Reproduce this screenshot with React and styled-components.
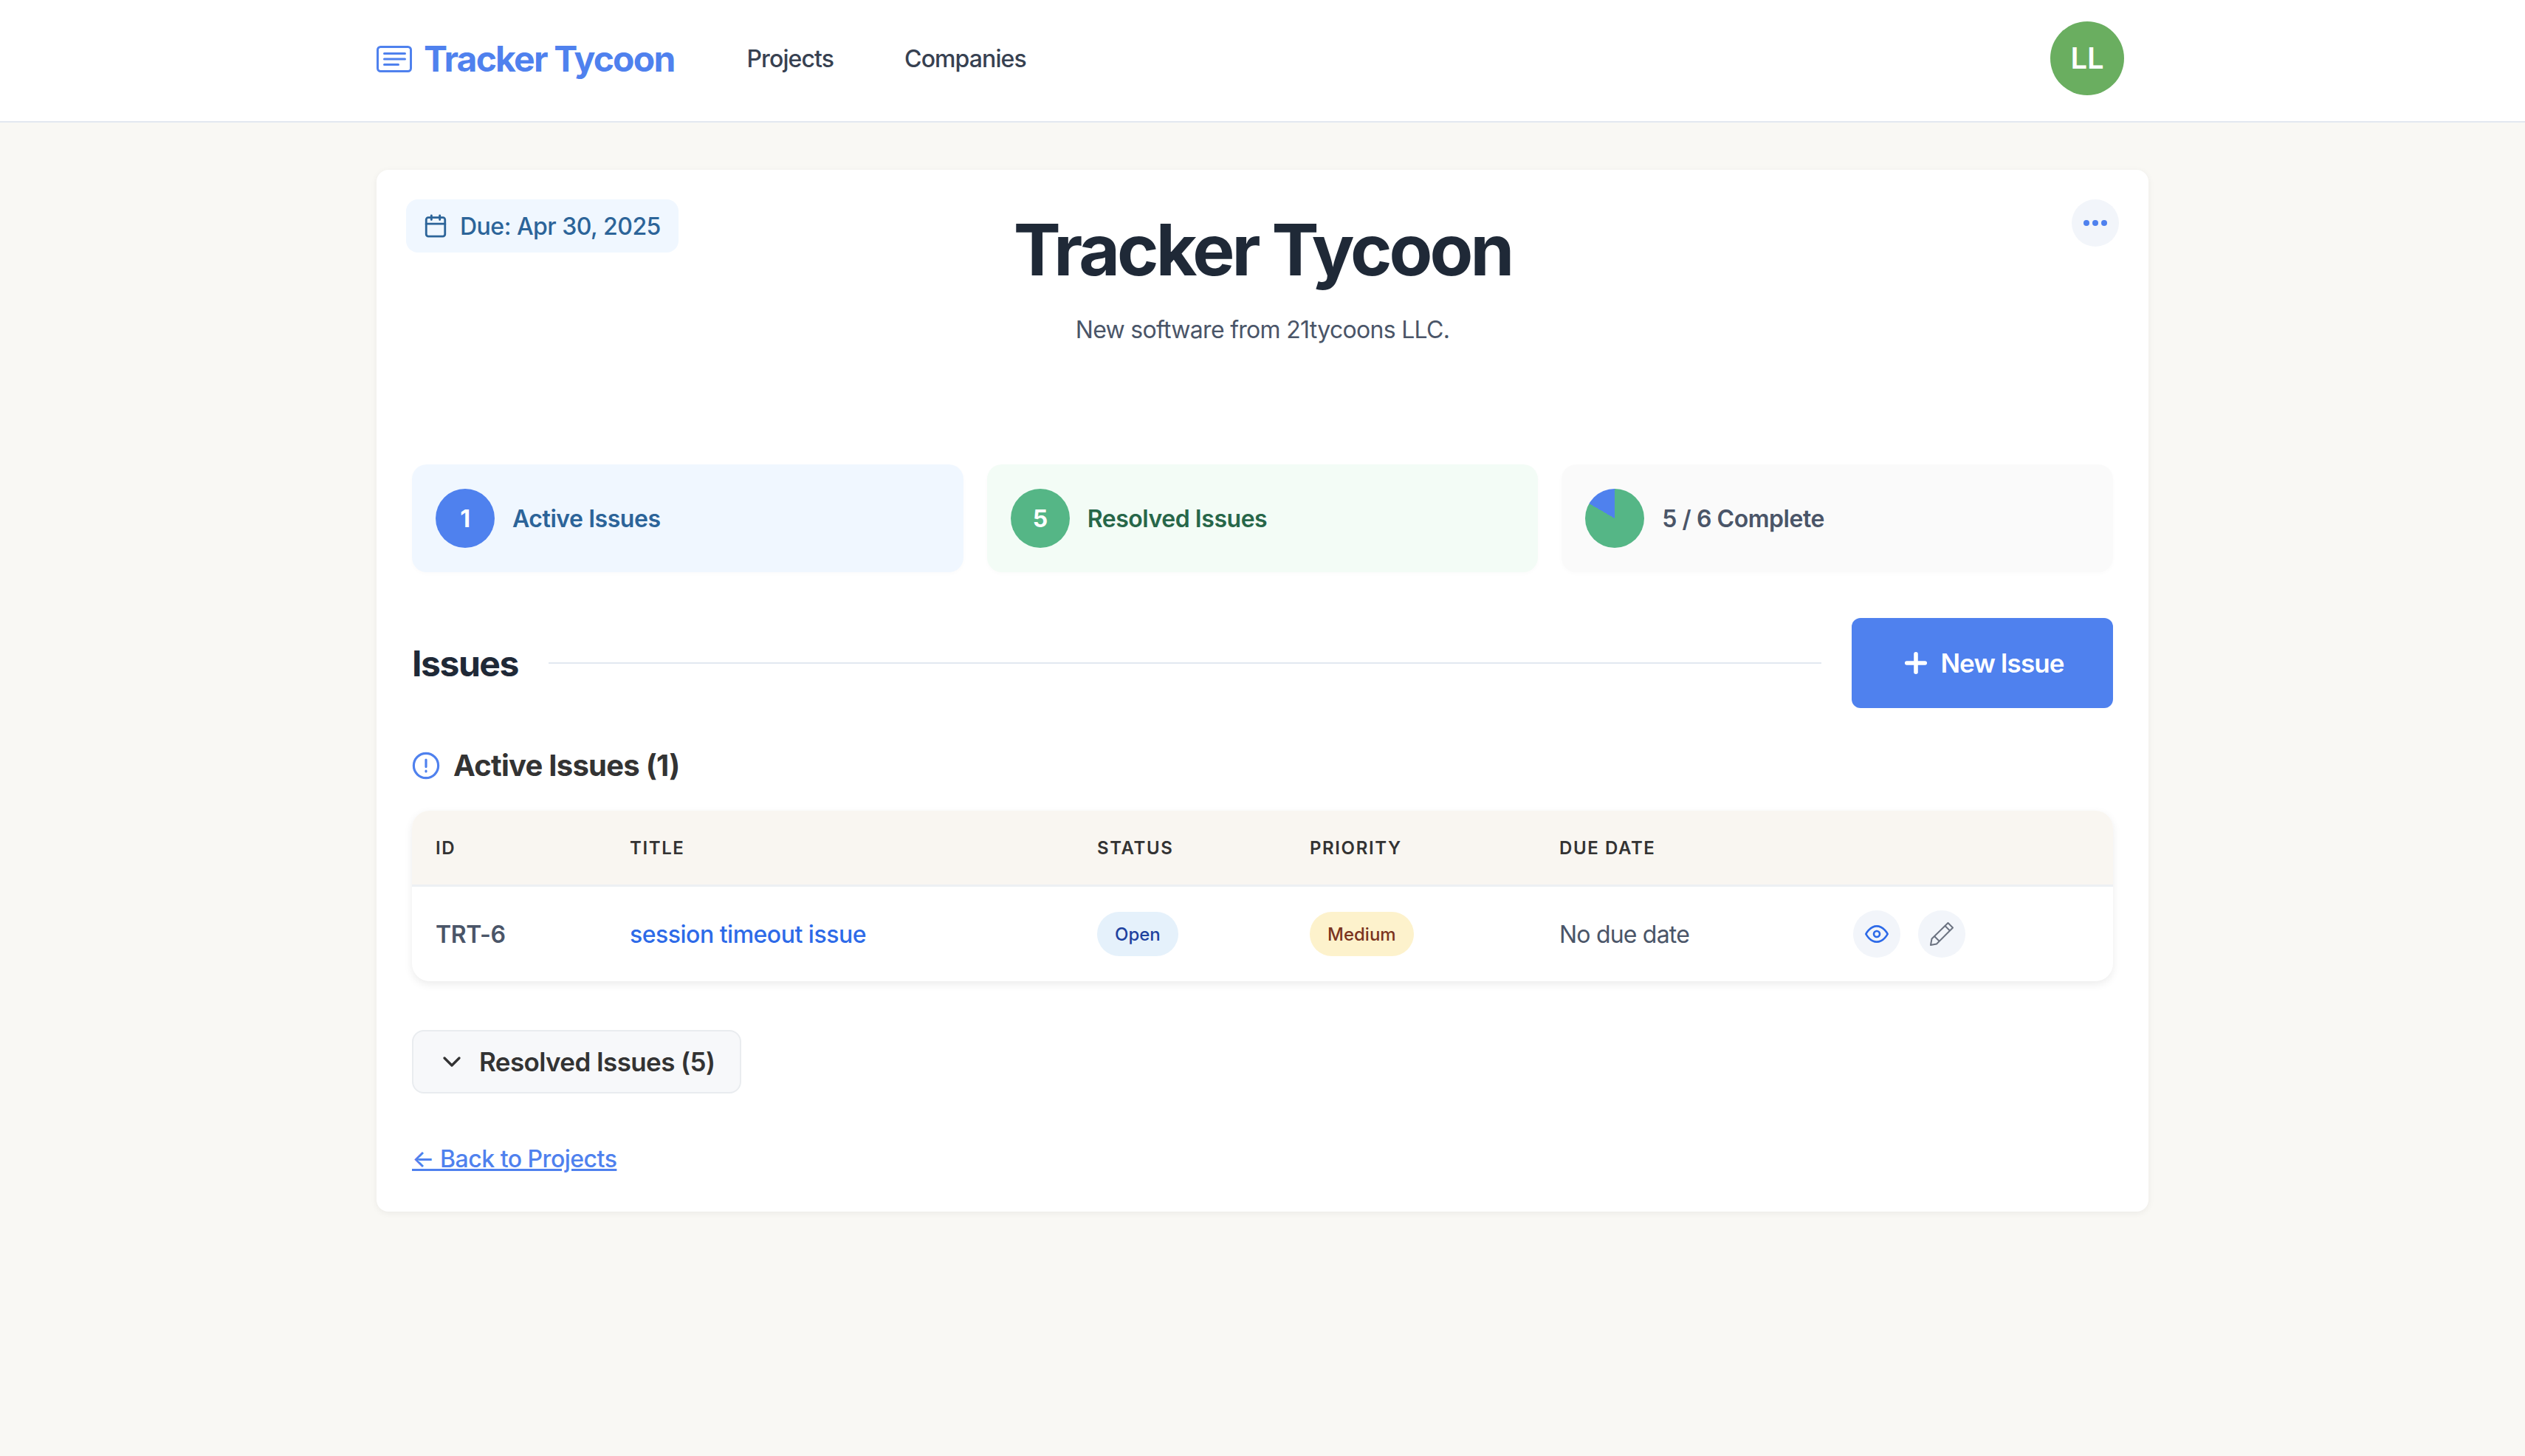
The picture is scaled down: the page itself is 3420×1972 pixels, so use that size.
import React from 'react'
import styled, { createGlobalStyle } from 'styled-components'
import { Calendar, Plus, ChevronDown } from 'lucide-react'
import { FiEye } from 'react-icons/fi'

const GlobalStyle = createGlobalStyle`
    * { box-sizing: border-box; }
    html, body { margin: 0; padding: 0; }
    body {
        background-color: #f9f8f4;
        font-family: Inter, "Liberation Sans", sans-serif;
        color: #333333;
        min-height: 1972px;
    }
`

const Header = styled.header`
    height: 166px;
    padding-bottom: 7px;
    background-color: #ffffff;
    border-bottom: 2px solid #e2e8f0;
    display: flex;
    justify-content: center;
`

const HeaderInner = styled.div`
    width: 2400px;
    display: flex;
    align-items: center;
`

const Logo = styled.a`
    display: flex;
    align-items: center;
    gap: 16px;
    padding-top: 2px;
    font-size: 48px;
    font-weight: 700;
    letter-spacing: -1.8px;
    color: #4f81ee;
    margin-right: 98px;
`

const Nav = styled.nav`
    display: flex;
    gap: 96px;
    padding-top: 2px;
`

const NavLink = styled.a`
    font-size: 32px;
    font-weight: 500;
    letter-spacing: -0.9px;
    color: #374151;
`

const Avatar = styled.div`
    width: 100px;
    height: 100px;
    margin-left: auto;
    margin-right: 33px;
    border-radius: 50%;
    background-color: #6aae60;
    color: #ffffff;
    font-size: 40px;
    font-weight: 600;
    display: flex;
    align-items: center;
    justify-content: center;
`

const Main = styled.main`
    width: 2400px;
    margin: 64px auto 0;
`

const Card = styled.section`
    position: relative;
    background-color: #ffffff;
    border-radius: 16px;
    box-shadow: 0 2px 10px rgba(0, 0, 0, 0.06);
    padding: 50px 48px 47px;
`

const DueBadge = styled.div`
    position: absolute;
    top: 40px;
    left: 40px;
    height: 72px;
    padding: 0 24px 0 23px;
    display: flex;
    align-items: center;
    gap: 16px;
    background-color: #f0f7ff;
    border-radius: 16px;
    color: #2c6499;
    font-size: 32px;
    font-weight: 500;
    letter-spacing: -0.5px;
`

const MoreButton = styled.button`
    position: absolute;
    top: 40px;
    right: 40px;
    width: 64px;
    height: 64px;
    border: 0;
    padding: 0;
    border-radius: 50%;
    background-color: #f2f5fa;
    display: flex;
    align-items: center;
    justify-content: center;
    gap: 4px;
`

const Dot = styled.span`
    width: 8px;
    height: 8px;
    border-radius: 50%;
    background-color: #4f81ee;
`

const TitleBlock = styled.div`
    text-align: center;
    height: 349px;
`

const Title = styled.h1`
    margin: 0;
    font-size: 96px;
    line-height: 116px;
    font-weight: 700;
    letter-spacing: -3.9px;
    color: #1f2937;
`

const Subtitle = styled.p`
    margin: 27px 0 0;
    font-size: 32px;
    line-height: 48px;
    letter-spacing: -0.7px;
    color: #4a5568;
`

const Stats = styled.div`
    display: grid;
    grid-template-columns: repeat(3, 1fr);
    gap: 32px;
`

const StatCard = styled.div`
    height: 146px;
    padding: 0 32px;
    display: flex;
    align-items: center;
    gap: 24px;
    border-radius: 20px;
    background-color: ${p => p.$bg};
    color: ${p => p.$color};
    font-size: 32px;
    font-weight: 600;
    letter-spacing: -0.45px;
    box-shadow: 0 2px 6px rgba(0, 0, 0, 0.02);
`

const StatCircle = styled.div`
    width: 80px;
    height: 80px;
    border-radius: 50%;
    background-color: ${p => p.$bg};
    color: #ffffff;
    font-weight: 700;
    display: flex;
    align-items: center;
    justify-content: center;
`

const Pie = styled.div`
    width: 80px;
    height: 80px;
    border-radius: 50%;
    background: conic-gradient(#55b686 0 83.33%, #4f81ee 83.33% 100%);
`

const IssuesHeader = styled.div`
    display: flex;
    align-items: center;
    gap: 41px;
    margin-top: 62px;
`

const IssuesTitle = styled.h2`
    margin: 0;
    font-size: 48px;
    font-weight: 700;
    letter-spacing: -1.45px;
    color: #1f2937;
`

const Rule = styled.div`
    flex: 1;
    height: 2px;
    background-color: #e2e8f0;
`

const NewButton = styled.button`
    width: 354px;
    height: 122px;
    border: 0;
    border-radius: 12px;
    background-color: #4f81ee;
    color: #ffffff;
    font-family: inherit;
    font-size: 35px;
    font-weight: 600;
    letter-spacing: -0.9px;
    display: flex;
    align-items: center;
    justify-content: center;
    gap: 12px;
`

const SectionTitle = styled.h3`
    margin: 48px 0 0;
    display: flex;
    align-items: center;
    gap: 18px;
    font-size: 40px;
    line-height: 60px;
    font-weight: 700;
    letter-spacing: -0.75px;
    color: #333333;
`

const TableCard = styled.div`
    margin-top: 31px;
    border-radius: 24px;
    overflow: hidden;
    background-color: #ffffff;
    box-shadow: 0 4px 12px rgba(0, 0, 0, 0.08);
`

const Row = styled.div`
    display: grid;
    grid-template-columns: 263px 633px 288px 338px 398px 1fr;
    align-items: center;
    height: ${p => p.$height}px;
    background-color: ${p => p.$bg || 'transparent'};
    border-bottom: ${p => p.$divided ? '3px solid #edf0f3' : '0'};
`

const HeadCell = styled.div`
    padding-left: 32px;
    font-size: 24px;
    font-weight: 600;
    letter-spacing: 1.6px;
    text-transform: uppercase;
    color: #333333;
`

const Cell = styled.div`
    padding-left: 32px;
    font-size: 32px;
    font-weight: ${p => p.$weight || 400};
    letter-spacing: ${p => p.$spacing || 0}px;
    color: ${p => p.$color || '#4a5568'};
`

const Pill = styled.span`
    display: inline-flex;
    align-items: center;
    height: 60px;
    padding: 0 24px;
    border-radius: 30px;
    font-size: 24px;
    font-weight: 500;
    letter-spacing: 0;
    background-color: ${p => p.$bg};
    color: ${p => p.$color};
`

const Actions = styled.div`
    display: flex;
    gap: 24px;
    padding-left: 32px;
`

const ActionButton = styled.button`
    width: 64px;
    height: 64px;
    border: 0;
    padding: 0;
    border-radius: 50%;
    background-color: #f2f5fa;
    color: ${p => p.$color};
    display: flex;
    align-items: center;
    justify-content: center;
`

const ResolvedToggle = styled.button`
    margin-top: 66px;
    height: 86px;
    padding: 0 34px 0 32px;
    display: flex;
    align-items: center;
    gap: 17px;
    border: 2px solid #e9ecef;
    border-radius: 16px;
    background-color: #f7f8fa;
    color: #333333;
    font-family: inherit;
    font-size: 35px;
    font-weight: 600;
    letter-spacing: -0.6px;
`

const BackLink = styled.a`
    display: block;
    width: fit-content;
    margin-top: 65px;
    font-size: 32px;
    line-height: 48px;
    font-weight: 500;
    letter-spacing: -0.5px;
    color: #4f81ee;
    text-decoration: underline;
`

const LogoIcon = () => (
    <svg width="48" height="36" viewBox="0 0 48 36" fill="none" stroke="#4f81ee" strokeWidth="3" strokeLinecap="round">
        <rect x="1.5" y="1.5" width="45" height="33" rx="4" />
        <path d="M10.5 10.5h28M10.5 18h28M10.5 25.5h19" />
    </svg>
)

const AlertIcon = () => (
    <svg width="38" height="38" viewBox="0 0 24 24" fill="none" stroke="#4f81ee" strokeWidth="2" strokeLinecap="round">
        <circle cx="12" cy="12" r="10.5" />
        <path d="M12 7v6M12 16.5v.5" />
    </svg>
)

const PencilIcon = () => (
    <svg width="32" height="32" viewBox="0 0 32 32" fill="none" stroke="currentColor" strokeWidth="2" strokeLinejoin="round">
        <path d="M24.5 1 31 7.5 9 29.5 1 31l1.5-8.5z" />
        <path d="M20.5 5 27 11.5M6 19l7 7" />
    </svg>
)

const App = () => {
    return (
        <>
            <GlobalStyle />
            <Header>
                <HeaderInner>
                    <Logo><LogoIcon />Tracker Tycoon</Logo>
                    <Nav>
                        <NavLink>Projects</NavLink>
                        <NavLink>Companies</NavLink>
                    </Nav>
                    <Avatar>LL</Avatar>
                </HeaderInner>
            </Header>
            <Main>
                <Card>
                    <DueBadge><Calendar size={34} strokeWidth={2} />Due: Apr 30, 2025</DueBadge>
                    <MoreButton><Dot /><Dot /><Dot /></MoreButton>
                    <TitleBlock>
                        <Title>Tracker Tycoon</Title>
                        <Subtitle>New software from 21tycoons LLC.</Subtitle>
                    </TitleBlock>
                    <Stats>
                        <StatCard $bg="#f0f7ff" $color="#2c6499">
                            <StatCircle $bg="#4f81ee">1</StatCircle>Active Issues
                        </StatCard>
                        <StatCard $bg="#f3fcf6" $color="#276749">
                            <StatCircle $bg="#55b686">5</StatCircle>Resolved Issues
                        </StatCard>
                        <StatCard $bg="#fafafa" $color="#4a5568">
                            <Pie />5 / 6 Complete
                        </StatCard>
                    </Stats>
                    <IssuesHeader>
                        <IssuesTitle>Issues</IssuesTitle>
                        <Rule />
                        <NewButton><Plus size={42} strokeWidth={3.2} />New Issue</NewButton>
                    </IssuesHeader>
                    <SectionTitle><AlertIcon />Active Issues (1)</SectionTitle>
                    <TableCard>
                        <Row $height={103} $bg="#f9f6f1" $divided>
                            <HeadCell>ID</HeadCell>
                            <HeadCell>Title</HeadCell>
                            <HeadCell>Status</HeadCell>
                            <HeadCell>Priority</HeadCell>
                            <HeadCell>Due Date</HeadCell>
                            <HeadCell />
                        </Row>
                        <Row $height={128}>
                            <Cell $weight={600} $spacing={-0.4}>TRT-6</Cell>
                            <Cell $weight={500} $spacing={-0.5} $color="#2d6ae8">session timeout issue</Cell>
                            <Cell><Pill $bg="#e5f1fb" $color="#1e429f">Open</Pill></Cell>
                            <Cell><Pill $bg="#fdf2cc" $color="#7b341e">Medium</Pill></Cell>
                            <Cell $spacing={-0.8}>No due date</Cell>
                            <Actions>
                                <ActionButton $color="#2d6ae8"><FiEye size={32} /></ActionButton>
                                <ActionButton $color="#6b7280"><PencilIcon /></ActionButton>
                            </Actions>
                        </Row>
                    </TableCard>
                    <ResolvedToggle><ChevronDown size={40} strokeWidth={2} />Resolved Issues (5)</ResolvedToggle>
                    <BackLink>← Back to Projects</BackLink>
                </Card>
            </Main>
        </>
    )
}

export default App
